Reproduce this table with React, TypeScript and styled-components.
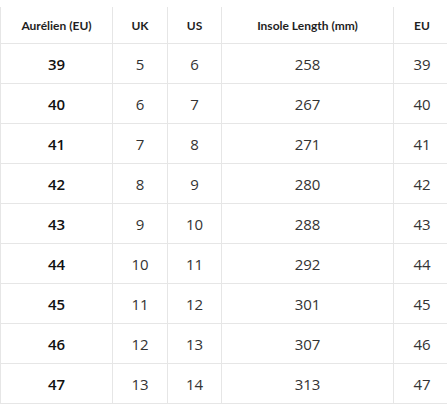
import React from "react";
import styled, { createGlobalStyle } from "styled-components";

const Global = createGlobalStyle`
  html, body { margin: 0; padding: 0; background: #fff; overflow: hidden; }
  body { font-family: "Open Sans", "Liberation Sans", sans-serif; }
`;

const Page = styled.div`
  width: 447px;
  height: 408px;
  padding-top: 7px;
  box-sizing: border-box;
  overflow: hidden;
`;

const Table = styled.table`
  border-collapse: collapse;
  table-layout: fixed;
  width: 450px;
`;

const HeadCell = styled.th`
  height: 36px;
  padding: 0;
  border-left: 1px solid #e6e6e6;
  border-right: 1px solid #e6e6e6;
  border-bottom: 1px solid #e6e6e6;
  font-family: "Lato", "Open Sans", sans-serif;
  font-weight: 700;
  font-size: 12px;
  color: #1f1f1f;
  text-align: center;
  vertical-align: middle;
`;

const Cell = styled.td<{ $strong?: boolean }>`
  height: 39px;
  padding: 0;
  border: 1px solid #e6e6e6;
  border-top: none;
  font-family: "Open Sans", "Liberation Sans", sans-serif;
  font-size: 15px;
  font-weight: ${(p) => (p.$strong ? 600 : 400)};
  color: ${(p) => (p.$strong ? "#111" : "#333")};
  text-align: center;
  vertical-align: middle;
`;

const widths = [112, 55, 54, 172, 57];
const headers = ["Aurélien (EU)", "UK", "US", "Insole Length (mm)", "EU"];
const rows = [
  [39, 5, 6, 258, 39],
  [40, 6, 7, 267, 40],
  [41, 7, 8, 271, 41],
  [42, 8, 9, 280, 42],
  [43, 9, 10, 288, 43],
  [44, 10, 11, 292, 44],
  [45, 11, 12, 301, 45],
  [46, 12, 13, 307, 46],
  [47, 13, 14, 313, 47],
];

export default function App() {
  return (
    <>
      <Global />
      <Page>
        <Table>
          <colgroup>
            {widths.map((w, i) => (
              <col key={i} style={{ width: w }} />
            ))}
          </colgroup>
          <thead>
            <tr>
              {headers.map((h) => (
                <HeadCell key={h}>{h}</HeadCell>
              ))}
            </tr>
          </thead>
          <tbody>
            {rows.map((r) => (
              <tr key={r[0]}>
                {r.map((v, i) => (
                  <Cell key={i} $strong={i === 0}>
                    {v}
                  </Cell>
                ))}
              </tr>
            ))}
          </tbody>
        </Table>
      </Page>
    </>
  );
}
